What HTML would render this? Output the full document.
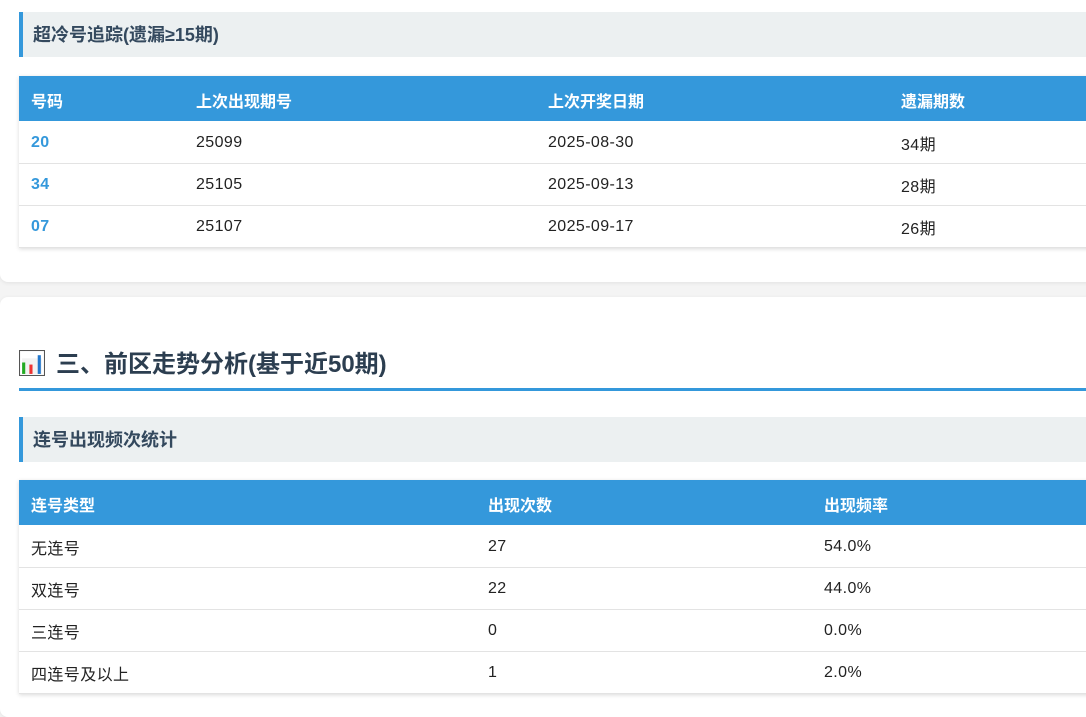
<!DOCTYPE html>
<html><head><meta charset="utf-8"><style>
*{margin:0;padding:0;box-sizing:border-box}
body{width:1086px;height:704px;overflow:hidden;background:#f4f4f4;font-family:"Liberation Sans","Noto Sans CJK SC",sans-serif;color:#222;position:relative}
.card{position:absolute;left:0;width:1200px;background:#fff;border-radius:8px;box-shadow:0 1px 4px rgba(0,0,0,.08)}
.sub{position:absolute;left:19px;width:1200px;height:45px;background:#ecf0f1;border-left:4px solid #3498db;font-size:18px;font-weight:bold;color:#34495e;line-height:46px;padding-left:10px}
table{position:absolute;left:19px;border-collapse:collapse;table-layout:fixed;box-shadow:0 1px 4px rgba(0,0,0,.15);background:#fff}
th{background:#3498db;color:#fff;font-weight:bold;font-size:16px;text-align:left;height:45px;padding-left:12px;padding-top:2px}
td{height:42px;font-size:16px;padding-left:12px;border-bottom:1px solid #e3e3e3;padding-top:2px;letter-spacing:0.4px}
td.n{color:#3498db;font-weight:bold}
h2{position:absolute;left:19px;top:346px;width:1200px;font-size:24px;font-weight:bold;color:#2c3e50;height:45px;border-bottom:3px solid #3498db;line-height:38px}
</style></head><body>
<div class="card" style="top:-10px;height:292px"></div>
<div class="card" style="top:297px;height:420px"></div>
<div class="sub" style="top:12px">超冷号追踪(遗漏≥15期)</div>
<table style="top:76px;width:1300px">
<colgroup><col style="width:165px"><col style="width:352px"><col style="width:353px"><col style="width:430px"></colgroup>
<tr><th>号码</th><th>上次出现期号</th><th>上次开奖日期</th><th>遗漏期数</th></tr>
<tr><td class="n">20</td><td>25099</td><td>2025-08-30</td><td>34期</td></tr>
<tr><td class="n">34</td><td>25105</td><td>2025-09-13</td><td>28期</td></tr>
<tr><td class="n">07</td><td>25107</td><td>2025-09-17</td><td>26期</td></tr>
</table>
<h2><svg width="26" height="26" viewBox="0 0 25 25" style="vertical-align:-4px;margin-right:11px"><rect x="0.5" y="0.5" width="24" height="24" fill="#fff" stroke="#555"/><rect x="3" y="8" width="19" height="15" fill="#f2f2f2"/><rect x="3" y="12" width="3" height="11" fill="#2a2"/><rect x="10" y="14" width="3" height="9" fill="#e33"/><rect x="18" y="5" width="3" height="18" fill="#27c"/></svg>三、前区走势分析(基于近50期)</h2>
<div class="sub" style="top:417px">连号出现频次统计</div>
<table style="top:480px;width:1300px">
<colgroup><col style="width:457px"><col style="width:336px"><col style="width:507px"></colgroup>
<tr><th>连号类型</th><th>出现次数</th><th>出现频率</th></tr>
<tr><td>无连号</td><td>27</td><td>54.0%</td></tr>
<tr><td>双连号</td><td>22</td><td>44.0%</td></tr>
<tr><td>三连号</td><td>0</td><td>0.0%</td></tr>
<tr><td>四连号及以上</td><td>1</td><td>2.0%</td></tr>
</table>
</body></html>
